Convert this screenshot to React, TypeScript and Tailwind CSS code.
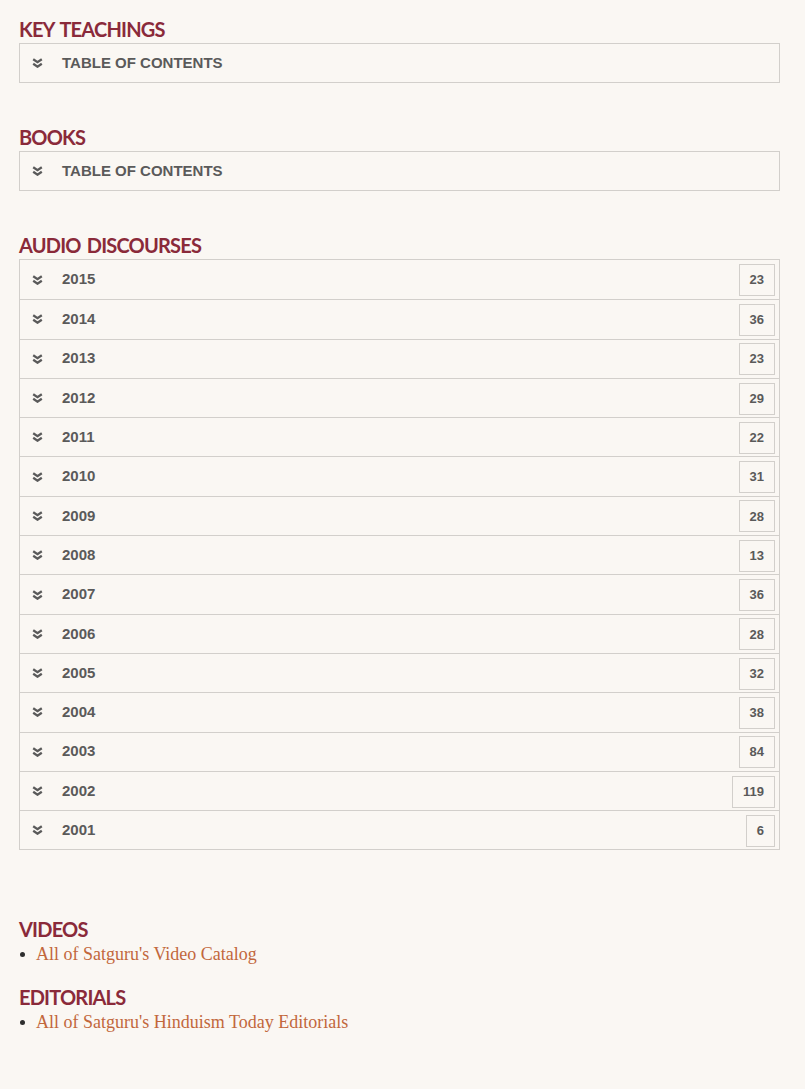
const years: [string, number][] = [
  ["2015", 23],
  ["2014", 36],
  ["2013", 23],
  ["2012", 29],
  ["2011", 22],
  ["2010", 31],
  ["2009", 28],
  ["2008", 13],
  ["2007", 36],
  ["2006", 28],
  ["2005", 32],
  ["2004", 38],
  ["2003", 84],
  ["2002", 119],
  ["2001", 6],
];

const Chevrons = () => (
  <svg width="11" height="10" viewBox="0 0 11 10" className="shrink-0 text-[#5a5a5a]">
    <path d="M1.2 1.2 L5.5 4.1 L9.8 1.2" fill="none" stroke="currentColor" strokeWidth="2.3" />
    <path d="M1.2 5.8 L5.5 8.7 L9.8 5.8" fill="none" stroke="currentColor" strokeWidth="2.3" />
  </svg>
);

const Heading = ({ children }: { children: string }) => (
  <h2 className="font-['Lato',sans-serif] text-[20px] leading-[24px] font-bold tracking-[-0.8px] [word-spacing:2px] text-[#8a2a3a] mb-[2px]">
    {children}
  </h2>
);

const TocBox = () => (
  <div className="h-[40px] border border-[#d2cfcb] flex items-center">
    <div className="w-[12px]" />
    <Chevrons />
    <span className="ml-[19px] font-['Liberation_Sans',Arial,sans-serif] text-[15px] font-bold text-[#5a5a5a]">
      TABLE OF CONTENTS
    </span>
  </div>
);

const LinkItem = ({ children }: { children: string }) => (
  <div className="flex items-center h-[22px] mt-[1px]">
    <span className="w-[5px] h-[5px] rounded-full bg-[#2e2e2e] ml-[1px] mr-[11px]" />
    <a className="font-['Liberation_Serif',serif] text-[18px] text-[#c2673c]">{children}</a>
  </div>
);

export default function App() {
  return (
    <div className="min-h-[1089px] bg-[#faf7f3] pl-[19px] pr-[25px] pt-[17px]">
      <Heading>KEY TEACHINGS</Heading>
      <TocBox />

      <div className="h-[42px]" />
      <Heading>BOOKS</Heading>
      <TocBox />

      <div className="h-[42px]" />
      <Heading>AUDIO DISCOURSES</Heading>
      <div className="border border-[#d2cfcb]">
        {years.map(([year, count], i) => (
          <div
            key={year}
            className={`h-[39.3px] flex items-center ${i > 0 ? "border-t border-[#d2cfcb]" : ""}`}
          >
            <div className="w-[12px]" />
            <Chevrons />
            <span className="ml-[19px] font-['Liberation_Sans',Arial,sans-serif] text-[15px] font-bold text-[#5a5a5a]">
              {year}
            </span>
            <span className="ml-auto mr-[4px] mt-[1px] h-[32px] px-[10px] border border-[#d2cfcb] flex items-center justify-center font-['Liberation_Sans',Arial,sans-serif] text-[13px] font-bold text-[#5a5a5a]">
              {count}
            </span>
          </div>
        ))}
      </div>

      <div className="h-[67px]" />
      <Heading>VIDEOS</Heading>
      <LinkItem>All of Satguru's Video Catalog</LinkItem>

      <div className="h-[20px]" />
      <Heading>EDITORIALS</Heading>
      <LinkItem>All of Satguru's Hinduism Today Editorials</LinkItem>
    </div>
  );
}
